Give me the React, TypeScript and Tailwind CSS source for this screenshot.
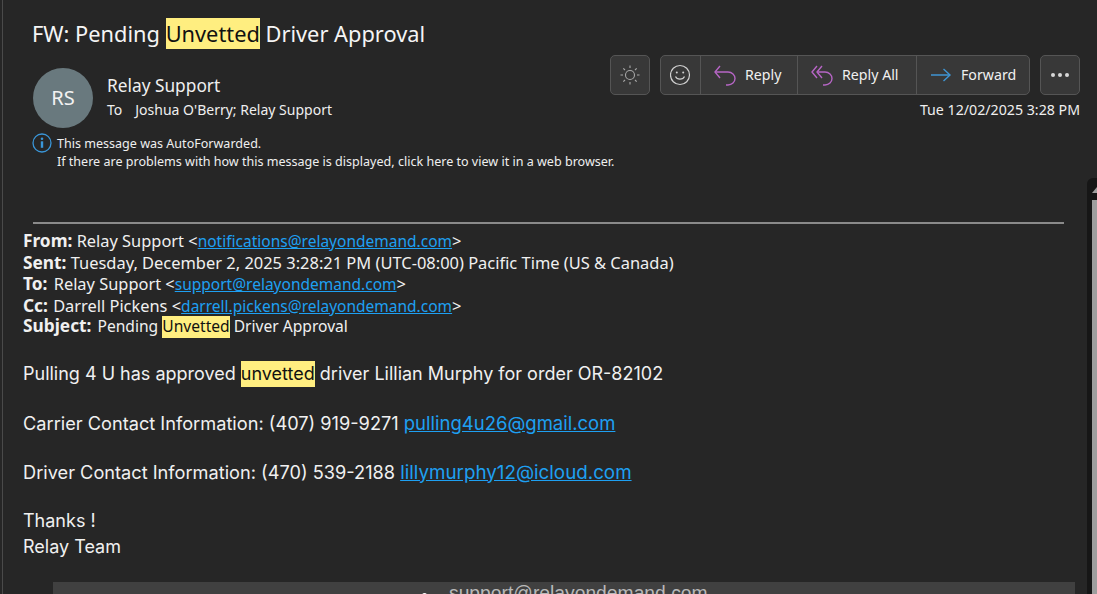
const Mark = ({ children }: { children: React.ReactNode }) => (
  <span className="inline-block bg-[#ffee80] text-[#111]">{children}</span>
);

const A = ({ size, children }: { size: string; children: React.ReactNode }) => (
  <a className={`${size} leading-none text-[#1ea0f2] underline`}>{children}</a>
);

const Label = ({ children }: { children: React.ReactNode }) => (
  <b className="text-[17.3px] leading-none">{children}</b>
);

function ReplyIcon() {
  return (
    <svg width="22" height="22" viewBox="0 0 22 22" fill="none" stroke="#b565c4" strokeWidth="1.4">
      <path d="M6 2 L1 8 L6 14" />
      <path d="M1 8 H14 C18 8 21 11 21 14.500 C21 18 18 21 14 21 H12" />
    </svg>
  );
}

function ReplyAllIcon() {
  return (
    <svg width="22" height="22" viewBox="0 0 22 22" fill="none" stroke="#b565c4" strokeWidth="1.4">
      <path d="M6 2 L1 8 L6 14" />
      <path d="M11 2 L6 8 L11 14" />
      <path d="M6 8 H14 C18 8 21 11 21 14.500 C21 18 18 21 14 21 H12" />
    </svg>
  );
}

function ForwardIcon() {
  return (
    <svg width="22" height="22" viewBox="0 0 22 22" fill="none" stroke="#3f95d3" strokeWidth="1.4">
      <path d="M1 11 H20" />
      <path d="M13.500 5 L20 11 L13.500 17" />
    </svg>
  );
}

function SunIcon() {
  return (
    <svg width="22" height="22" viewBox="0 0 22 22" fill="none" stroke="#a8a8a8" strokeWidth="1.1">
      <circle cx="11" cy="11" r="4.500" />
      <path d="M11 1.500 V4 M11 18 V20.500 M1.500 11 H4 M18 11 H20.500 M4.300 4.300 L6 6 M16 16 L17.700 17.700 M4.300 17.700 L6 16 M16 6 L17.700 4.300" />
    </svg>
  );
}

function SmileIcon() {
  return (
    <svg width="22" height="22" viewBox="0 0 22 22" fill="none" stroke="#d0d0d0" strokeWidth="1.2">
      <circle cx="10" cy="11" r="9.500" />
      <circle cx="6.800" cy="8.500" r="1" fill="#d0d0d0" stroke="none" />
      <circle cx="13.200" cy="8.500" r="1" fill="#d0d0d0" stroke="none" />
      <path d="M5.500 12.500 C7 16 13 16 14.500 12.500" />
    </svg>
  );
}

function InfoIcon() {
  return (
    <svg className="shrink-0" width="20" height="20" viewBox="0 0 20 20" fill="none">
      <circle cx="10" cy="10" r="9" stroke="#3a96d8" strokeWidth="1.3" />
      <circle cx="10" cy="5.800" r="1.300" fill="#3a96d8" />
      <rect x="8.800" y="8.300" width="2.400" height="6.500" fill="#3a96d8" />
    </svg>
  );
}

function Header() {
  return (
    <div className="flex h-[222px] justify-between pl-[32px] pr-[17px] font-['Noto_Sans',sans-serif]">
      <div className="flex min-w-0 flex-1 flex-col">
        <h1 className="mt-[18px] w-fit text-[21.8px] leading-[31px] text-[#f5f5f5]">
          FW: Pending <Mark>Unvetted</Mark> Driver Approval
        </h1>
        <div className="mt-[19px] flex items-start gap-[15px]">
          <div className="ml-[1px] flex h-[60px] w-[60px] items-center justify-center rounded-full bg-[#69797e] text-[20px] text-[#f2f2f2]">
            RS
          </div>
          <div className="pt-[5px] text-[#efefef]">
            <div className="-ml-[1px] text-[17.3px] leading-[26px]">Relay Support</div>
            <div className="text-[14px] leading-[21px]">
              <span className="-ml-[1px]">To</span>
              <span className="ml-[13px]">Joshua O'Berry; Relay Support</span>
            </div>
          </div>
        </div>
        <div className="mt-[5px] flex items-start gap-[5px] whitespace-nowrap text-[12.55px] leading-[18px] text-[#efefef]">
          <InfoIcon />
          <div className="pt-[2px]">
            <div>This message was AutoForwarded.</div>
            <div>If there are problems with how this message is displayed, click here to view it in a web browser.</div>
          </div>
        </div>
      </div>
      <div className="flex shrink-0 flex-col items-end pt-[55px]">
        <div className="flex gap-[10px]">
          <button className="flex h-[40px] w-[40px] items-center justify-center rounded-[5px] border border-[#555] bg-[#383838]">
            <SunIcon />
          </button>
          <div className="flex h-[40px] divide-x divide-[#555] overflow-hidden rounded-[5px] border border-[#555] bg-[#383838] text-[14.2px] text-[#f0f0f0]">
            <button className="flex w-[40px] items-center justify-center">
              <SmileIcon />
            </button>
            <button className="flex w-[97px] items-center gap-[9px] pl-[13px]">
              <ReplyIcon />
              Reply
            </button>
            <button className="flex w-[119px] items-center gap-[9px] pl-[13px]">
              <ReplyAllIcon />
              Reply All
            </button>
            <button className="flex w-[112px] items-center gap-[9px] pl-[13px]">
              <ForwardIcon />
              Forward
            </button>
          </div>
          <button className="flex h-[40px] w-[40px] items-center justify-center gap-[3px] rounded-[5px] border border-[#555] bg-[#383838]">
            <span className="h-[4px] w-[4px] rounded-full bg-[#d8d8d8]" />
            <span className="h-[4px] w-[4px] rounded-full bg-[#d8d8d8]" />
            <span className="h-[4px] w-[4px] rounded-full bg-[#d8d8d8]" />
          </button>
        </div>
        <div className="mt-[5px] text-[14.2px] leading-[20px] text-[#efefef]">Tue 12/02/2025 3:28 PM</div>
      </div>
    </div>
  );
}

function Body() {
  return (
    <div className="pl-[23px] pr-[22px]">
      <div className="ml-[10px] mr-[11px] h-[2px] bg-[#8a8a8a]" />
      <div className="font-['Noto_Sans',sans-serif] text-[16.4px] leading-[21.500px] text-[#f0f0f0]">
        <div className="mt-[6px]">
          <Label>From:</Label> Relay Support &lt;<A size="text-[15.5px]">notifications@relayondemand.com</A>&gt;
        </div>
        <div className="text-[16.45px]">
          <Label>Sent:</Label> Tuesday, December 2, 2025 3:28:21 PM (UTC-08:00) Pacific Time (US &amp; Canada)
        </div>
        <div>
          <Label>To:</Label> <span className="ml-[2px]">Relay Support &lt;</span>
          <A size="text-[15.5px]">support@relayondemand.com</A>&gt;
        </div>
        <div>
          <Label>Cc:</Label> <span className="ml-[1px]">Darrell Pickens &lt;</span>
          <A size="text-[15.5px]">darrell.pickens@relayondemand.com</A>&gt;
        </div>
        <div className="text-[15.6px]">
          <Label>Subject:</Label> <span className="ml-[2px]">Pending</span> <Mark>Unvetted</Mark> Driver Approval
        </div>
      </div>
      <div className="mt-[23px] flex flex-col gap-[23px] font-['Inter',sans-serif] text-[18px] leading-[26px] text-[#f0f0f0]">
        <div>
          Pulling 4 U has approved <Mark>unvetted</Mark> driver Lillian Murphy for order OR-82102
        </div>
        <div className="text-[18.2px]">
          Carrier Contact Information: (407) 919-9271 <A size="text-[18.5px]">pulling4u26@gmail.com</A>
        </div>
        <div className="text-[18.2px]">
          Driver Contact Information: (470) 539-2188 <A size="text-[18.8px]">lillymurphy12@icloud.com</A>
        </div>
        <div>
          <div>Thanks !</div>
          <div>Relay Team</div>
        </div>
      </div>
      <div className="mt-[22px] ml-[30px] h-[60px] bg-[#404040] pl-[369px] pt-[1px] font-['Liberation_Sans',sans-serif] text-[19.3px] leading-[22px] text-[#b8b8b8]">
        <div className="flex items-center gap-[22px]">
          <span className="mt-[4px] h-[5px] w-[5px] rounded-full bg-white" />
          support@relayondemand.com
        </div>
      </div>
    </div>
  );
}

export default function App() {
  return (
    <div className="relative h-[594px] w-[1097px] overflow-hidden bg-[#262626]">
      <div className="absolute top-0 bottom-0 left-[2px] w-px bg-[#4a4a4a]" />
      <Header />
      <Body />
      <div className="absolute top-[178px] right-0 bottom-0 w-[10px] rounded-tl-[6px] bg-[#161616]">
        <svg className="absolute top-[9px] right-0" width="5" height="6" viewBox="0 0 5 6">
          <path d="M0 6 L5 0 V6 Z" fill="#9e9e9e" />
        </svg>
        <div className="absolute top-[22px] right-0 bottom-0 w-[5px] bg-[#9e9e9e]" />
      </div>
    </div>
  );
}
